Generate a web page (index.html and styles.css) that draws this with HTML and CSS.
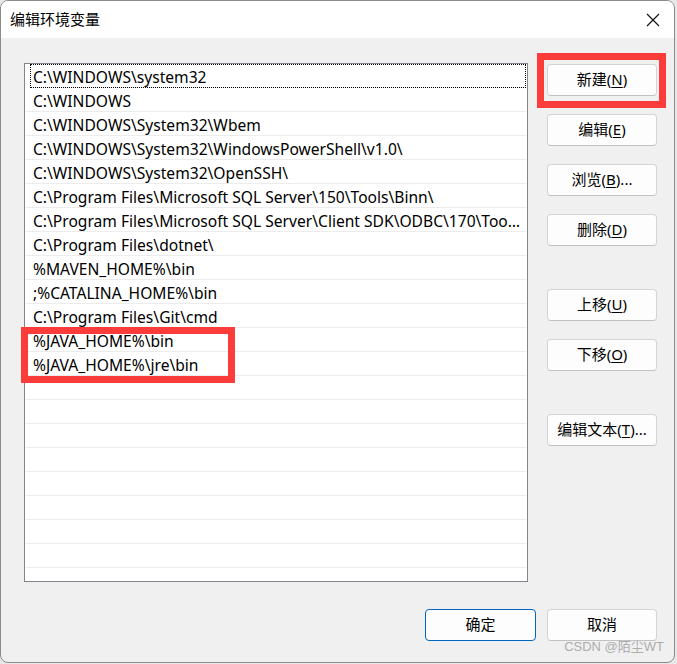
FILE: index.html
```html
<!DOCTYPE html>
<html>

<head>
   <title>编辑环境变量</title>
   <link rel="stylesheet" href="styles.css">
</head>

<body>
   <div class="window">
      <div class="titlebar">
         <span class="title">编辑环境变量</span>
         <svg class="close" width="14" height="14" viewBox="0 0 14 14">
            <path d="M1 1 L13 13 M13 1 L1 13" stroke="#1a1a1a" stroke-width="1.3" fill="none" />
         </svg>
      </div>

      <div class="content">
         <div class="list-wrap">
            <div class="list">
               <div class="row focused">C:\WINDOWS\system32</div>
               <div class="row">C:\WINDOWS</div>
               <div class="row">C:\WINDOWS\System32\Wbem</div>
               <div class="row">C:\WINDOWS\System32\WindowsPowerShell\v1.0\</div>
               <div class="row">C:\WINDOWS\System32\OpenSSH\</div>
               <div class="row">C:\Program Files\Microsoft SQL Server\150\Tools\Binn\</div>
               <div class="row">C:\Program Files\Microsoft SQL Server\Client SDK\ODBC\170\Tools\Binn\</div>
               <div class="row">C:\Program Files\dotnet\</div>
               <div class="row">%MAVEN_HOME%\bin</div>
               <div class="row">;%CATALINA_HOME%\bin</div>
               <div class="row">C:\Program Files\Git\cmd</div>
               <div class="row">%JAVA_HOME%\bin</div>
               <div class="row">%JAVA_HOME%\jre\bin</div>
               <div class="row"></div>
               <div class="row"></div>
               <div class="row"></div>
               <div class="row"></div>
               <div class="row"></div>
               <div class="row"></div>
               <div class="row"></div>
               <div class="row"></div>
               <div class="row"></div>
            </div>
            <div class="mark mark-rows"></div>
         </div>

         <div class="side">
            <div class="btn-wrap">
               <button class="btn">新建(<u>N</u>)</button>
               <div class="mark mark-btn"></div>
            </div>
            <button class="btn">编辑(<u>E</u>)</button>
            <button class="btn">浏览(<u>B</u>)...</button>
            <button class="btn">删除(<u>D</u>)</button>
            <button class="btn gap">上移(<u>U</u>)</button>
            <button class="btn">下移(<u>O</u>)</button>
            <button class="btn gap">编辑文本(<u>T</u>)...</button>
         </div>
      </div>

      <div class="footer">
         <button class="btn default">确定</button>
         <button class="btn">取消</button>
      </div>

      <div class="watermark">CSDN @陌尘WT</div>
   </div>
</body>

</html>
```

FILE: styles.css
```css
body {
   margin: 0;
   background-color: #e8e8e8;
   font-family: "Noto Sans", "Noto Sans CJK SC", sans-serif;
   color: #000;
}

.window {
   position: relative;
   width: 673px;
   height: 661px;
   border: 1px solid #8c8c8c;
   border-radius: 8px;
   background-color: #f0f0f0;
   overflow: hidden;
   display: flex;
   flex-direction: column;
}

.titlebar {
   height: 37px;
   background-color: #fff;
   display: flex;
   align-items: center;
   justify-content: space-between;
   padding: 0 14px 0 9px;
   flex-shrink: 0;
}

.title {
   font-size: 15px;
   padding-bottom: 3px;
}

.close {
   margin-top: 1px;
}

.content {
   display: flex;
   padding: 25px 0 0 23px;
   gap: 19px;
}

.list-wrap {
   position: relative;
}

.list {
   width: 502px;
   height: 517px;
   border: 1px solid #82858c;
   background-color: #fff;
   overflow: hidden;
}

.row {
   box-sizing: border-box;
   height: 24px;
   margin: 0 1px;
   padding: 3px 4px 0 7px;
   border-bottom: 1px solid #ececec;
   font-size: 15.6px;
   line-height: 20px;
   white-space: nowrap;
   overflow: hidden;
   text-overflow: ellipsis;
}

.row.focused {
   outline: 1px dotted #000;
   outline-offset: -1px;
   margin-left: 5px;
   padding-left: 3px;
}

.side {
   display: flex;
   flex-direction: column;
   gap: 18px;
   padding-top: 1px;
}

.btn-wrap {
   position: relative;
   display: flex;
}

.btn {
   width: 110px;
   height: 32px;
   box-sizing: border-box;
   background-color: #fdfdfd;
   border: 1px solid #d4d4d4;
   border-bottom-color: #c2c2c2;
   border-radius: 4px;
   font-family: "Noto Sans", "Noto Sans CJK SC", sans-serif;
   font-size: 15px;
   color: #000;
   padding: 0 0 3px 0;
}

.btn u {
   text-underline-offset: 2px;
}

.btn.gap {
   margin-top: 25px;
}

.btn.default {
   width: 111px;
   border: 1px solid #0067c0;
}

.mark {
   position: absolute;
   border: 7px solid #fc3b3b;
   pointer-events: none;
}

.mark-btn {
   left: -10px;
   top: -11px;
   right: -9px;
   bottom: -12px;
}

.mark-rows {
   left: -3px;
   top: 264px;
   width: 200px;
   height: 42px;
}

.footer {
   display: flex;
   justify-content: flex-end;
   gap: 11px;
   padding: 27px 17px 0 0;
}

.watermark {
   position: absolute;
   right: 10px;
   bottom: 7px;
   font-family: "Liberation Sans", "Noto Sans CJK SC", sans-serif;
   font-size: 13px;
   color: #adadad;
}
```
